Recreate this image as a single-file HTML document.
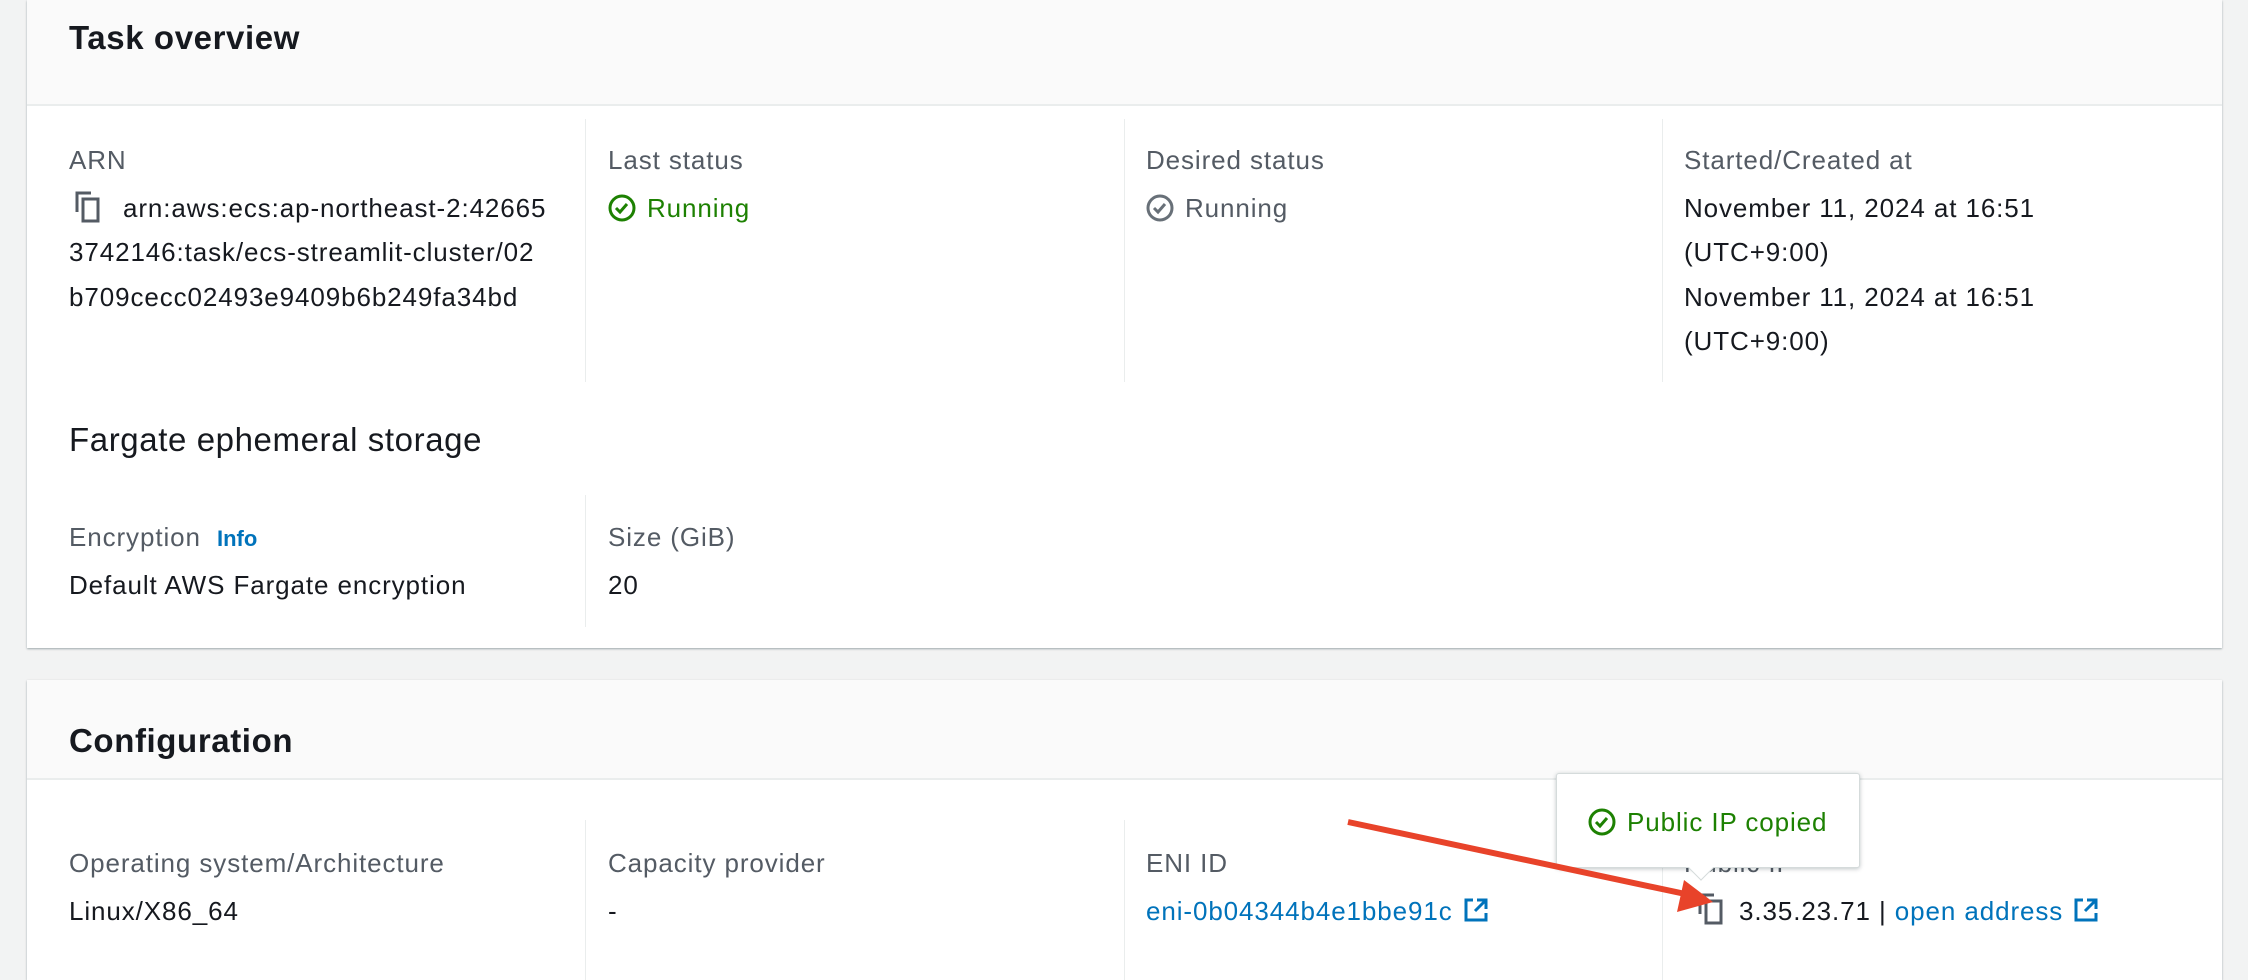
<!DOCTYPE html>
<html><head><meta charset="utf-8"><style>
*{margin:0;padding:0;box-sizing:border-box}
body{width:2248px;height:970px;background:#f2f3f3;font-family:"Liberation Sans",sans-serif;position:relative;overflow:hidden;color:#16191f}
.card{position:absolute;left:27px;width:2195px;background:#fff;box-shadow:0 1px 2px rgba(0,28,36,.35)}
.hdr{background:#fafafa;border-bottom:2px solid #eaeded;position:absolute;left:0;right:0;top:0}
.t{position:absolute;font-size:26px;letter-spacing:0.9px;white-space:nowrap}
.lbl{color:#545b64}
.h{font-weight:bold;font-size:33px;letter-spacing:0.6px}
.v{position:absolute;width:1px;background:#eaeded}
.g{color:#1d8102}
.a{color:#0073bb}
.ext{display:inline-block;vertical-align:-3px;margin-left:10px}
</style></head><body>
<div class="card" style="top:0;height:648px">
 <div class="hdr" style="height:106px"></div>
 <div class="t h" style="left:42px;top:19px">Task overview</div>
 <div class="v" style="left:558px;top:119px;height:263px"></div>
 <div class="v" style="left:1097px;top:119px;height:263px"></div>
 <div class="v" style="left:1635px;top:119px;height:263px"></div>
 <div class="t lbl" style="left:42px;top:145px">ARN</div>
 <svg style="position:absolute;left:47px;top:190px" width="30" height="34" viewBox="0 0 30 34"><path d="M3 22V3h14" fill="none" stroke="#545b64" stroke-width="3"/><rect x="9" y="9" width="15" height="22" fill="none" stroke="#545b64" stroke-width="3"/></svg>
 <div class="t" style="left:96px;top:193px">arn:aws:ecs:ap-northeast-2:42665</div>
 <div class="t" style="left:42px;top:237px">3742146:task/ecs-streamlit-cluster/02</div>
 <div class="t" style="left:42px;top:282px">b709cecc02493e9409b6b249fa34bd</div>
 <div class="t lbl" style="left:581px;top:145px">Last status</div>
 <svg style="position:absolute;left:581px;top:194px" width="28" height="28" viewBox="0 0 28 28"><circle cx="14" cy="14" r="12" fill="none" stroke="#1d8102" stroke-width="3"/><path d="M8 14l4 4 7-8" fill="none" stroke="#1d8102" stroke-width="3"/></svg>
 <div class="t g" style="left:620px;top:193px">Running</div>
 <div class="t lbl" style="left:1119px;top:145px">Desired status</div>
 <svg style="position:absolute;left:1119px;top:194px" width="28" height="28" viewBox="0 0 28 28"><circle cx="14" cy="14" r="12" fill="none" stroke="#687078" stroke-width="3"/><path d="M8 14l4 4 7-8" fill="none" stroke="#687078" stroke-width="3"/></svg>
 <div class="t lbl" style="left:1158px;top:193px">Running</div>
 <div class="t lbl" style="left:1657px;top:145px">Started/Created at</div>
 <div class="t" style="left:1657px;top:193px">November 11, 2024 at 16:51</div>
 <div class="t" style="left:1657px;top:237px">(UTC+9:00)</div>
 <div class="t" style="left:1657px;top:282px">November 11, 2024 at 16:51</div>
 <div class="t" style="left:1657px;top:326px">(UTC+9:00)</div>
 <div class="t" style="left:42px;top:421px;font-size:33px;letter-spacing:0.6px">Fargate ephemeral storage</div>
 <div class="v" style="left:558px;top:495px;height:132px"></div>
 <div class="t lbl" style="left:42px;top:522px">Encryption <span class="a" style="font-weight:bold;font-size:22px;margin-left:8px;letter-spacing:0">Info</span></div>
 <div class="t" style="left:42px;top:570px">Default AWS Fargate encryption</div>
 <div class="t lbl" style="left:581px;top:522px">Size (GiB)</div>
 <div class="t" style="left:581px;top:570px">20</div>
</div>
<div class="card" style="top:680px;height:300px">
 <div class="hdr" style="height:100px"></div>
 <div class="t h" style="left:42px;top:42px">Configuration</div>
 <div class="v" style="left:558px;top:140px;height:160px"></div>
 <div class="v" style="left:1097px;top:140px;height:160px"></div>
 <div class="v" style="left:1635px;top:140px;height:160px"></div>
 <div class="t lbl" style="left:42px;top:168px">Operating system/Architecture</div>
 <div class="t" style="left:42px;top:216px">Linux/X86_64</div>
 <div class="t lbl" style="left:581px;top:168px">Capacity provider</div>
 <div class="t" style="left:581px;top:216px">-</div>
 <div class="t lbl" style="left:1119px;top:168px">ENI ID</div>
 <div class="t a" style="left:1119px;top:216px">eni-0b04344b4e1bbe91c<svg class="ext" width="26" height="26" viewBox="0 0 26 26"><path d="M10 3H3v20h20v-7M14 3h9v9M23 3L12 14" fill="none" stroke="#0073bb" stroke-width="3"/></svg></div>
 <div class="t lbl" style="left:1657px;top:168px">Public IP</div>
 <svg style="position:absolute;left:1670px;top:212px" width="30" height="34" viewBox="0 0 30 34"><path d="M3 22V3h14" fill="none" stroke="#545b64" stroke-width="3"/><rect x="9" y="9" width="15" height="22" fill="none" stroke="#545b64" stroke-width="3"/></svg>
 <div class="t" style="left:1712px;top:216px">3.35.23.71 | <span class="a">open address</span><svg class="ext" width="26" height="26" viewBox="0 0 26 26"><path d="M10 3H3v20h20v-7M14 3h9v9M23 3L12 14" fill="none" stroke="#0073bb" stroke-width="3"/></svg></div>
</div>
<div style="position:absolute;left:1556px;top:773px;width:304px;height:95px;background:#fff;border:1px solid #d5dbdb;border-radius:3px;box-shadow:0 1px 4px rgba(0,28,36,.25)"></div>
<div style="position:absolute;left:1692px;top:859px;width:18px;height:18px;background:#fff;border-right:1px solid #d5dbdb;border-bottom:1px solid #d5dbdb;transform:rotate(45deg)"></div>
<svg style="position:absolute;left:1588px;top:808px" width="28" height="28" viewBox="0 0 28 28"><circle cx="14" cy="14" r="12" fill="none" stroke="#1d8102" stroke-width="3"/><path d="M8 14l4 4 7-8" fill="none" stroke="#1d8102" stroke-width="3"/></svg>
<div class="t g" style="left:1627px;top:807px">Public IP copied</div>
<svg style="position:absolute;left:0;top:0" width="2248" height="970"><line x1="1348" y1="822" x2="1690" y2="895" stroke="#e8432a" stroke-width="6"/><polygon points="1713,902 1684,880 1677,912" fill="#e8432a"/></svg>
</body></html>
